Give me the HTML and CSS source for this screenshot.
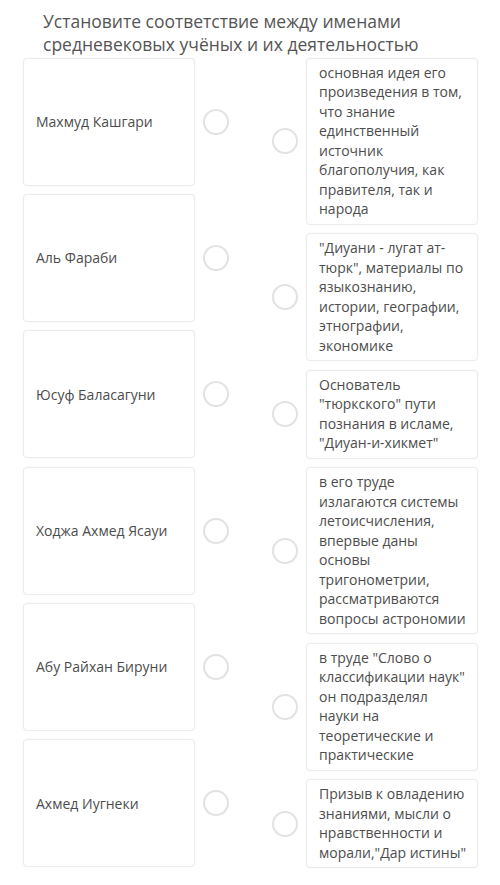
FILE: index.html
```html
<!DOCTYPE html>
<html lang="ru">
<head>
<meta charset="utf-8">
<link rel="stylesheet" href="styles.css">
</head>
<body>
<div class="page">
  <h1 class="title">Установите соответствие между именами средневековых учёных и их деятельностью</h1>
  <div class="board">
    <div class="col col-left">
      <div class="item"><div class="card card-left">Махмуд Кашгари</div><span class="dot"></span></div>
      <div class="item"><div class="card card-left">Аль Фараби</div><span class="dot"></span></div>
      <div class="item"><div class="card card-left">Юсуф Баласагуни</div><span class="dot"></span></div>
      <div class="item"><div class="card card-left">Ходжа Ахмед Ясауи</div><span class="dot"></span></div>
      <div class="item"><div class="card card-left">Абу Райхан Бируни</div><span class="dot"></span></div>
      <div class="item"><div class="card card-left">Ахмед Иугнеки</div><span class="dot"></span></div>
    </div>
    <div class="col col-right">
      <div class="item"><span class="dot"></span><div class="card card-right">основная идея его произведения в том, что знание единственный источник благополучия, как правителя, так и народа</div></div>
      <div class="item"><span class="dot"></span><div class="card card-right">"Диуани - лугат ат-тюрк", материалы по языкознанию, истории, географии, этнографии, экономике</div></div>
      <div class="item"><span class="dot"></span><div class="card card-right">Основатель "тюркского" пути познания в исламе, "Диуан-и-хикмет"</div></div>
      <div class="item"><span class="dot"></span><div class="card card-right">в его труде излагаются системы летоисчисления, впервые даны основы тригонометрии, рассматриваются вопросы астрономии</div></div>
      <div class="item"><span class="dot"></span><div class="card card-right">в труде "Слово о классификации наук" он подразделял науки на теоретические и практические</div></div>
      <div class="item"><span class="dot"></span><div class="card card-right">Призыв к овладению знаниями, мысли о нравственности и морали,"Дар истины"</div></div>
    </div>
  </div>
</div>
</body>
</html>
```

FILE: styles.css
```css
html, body {
  margin: 0;
  padding: 0;
  background: #ffffff;
}
body {
  font-family: "Open Sans", "Noto Sans", sans-serif;
  color: #4d4d4d;
  width: 500px;
  height: 885px;
  overflow: hidden;
}
.page {
  padding: 10px 22px 0 23px;
}
.title {
  margin: 0 0 1.5px 0;
  padding-left: 20px;
  font-size: 17.5px;
  line-height: 23px;
  font-weight: 400;
  color: #555555;
}
.board {
  display: flex;
  justify-content: space-between;
  align-items: flex-start;
}
.col {
  display: flex;
  flex-direction: column;
}
.col-left {
  gap: 8.4px;
}
.col-right {
  gap: 8.5px;
}
.item {
  display: flex;
  align-items: center;
  gap: 8px;
}
.card {
  box-sizing: border-box;
  width: 172px;
  background: #ffffff;
  border: 1px solid #ececec;
  border-radius: 4px;
  box-shadow: 0 0 2px rgba(0, 0, 0, 0.06);
  font-size: 14px;
  line-height: 19.5px;
  color: #4d4d4d;
}
.card-left {
  height: 128px;
  display: flex;
  align-items: center;
  padding: 0 8px 0 12px;
}
.card-right {
  padding: 4px 10px 5px 12px;
}
.dot {
  box-sizing: border-box;
  flex: none;
  width: 26px;
  height: 26px;
  border: 2px solid #e2e2e2;
  border-radius: 50%;
  background: #ffffff;
}
```
